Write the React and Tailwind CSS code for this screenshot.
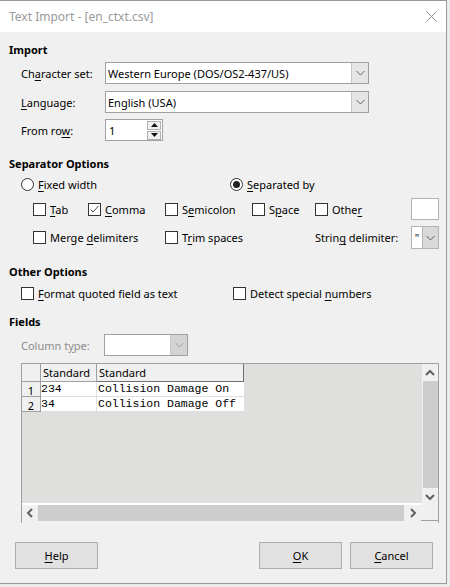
import React from "react";

// Underlined mnemonic letter
const U = ({ children }) => <span className="underline underline-offset-[2px] decoration-1">{children}</span>;

const Chevron = ({ color = "#606060" }) => (
  <svg width="9" height="6" viewBox="0 0 9 6" fill="none">
    <path d="M0.5 1 L4.5 5 L8.5 1" stroke={color} strokeWidth="1" />
  </svg>
);

const Check = ({ checked }) => (
  <span className="w-[13px] h-[13px] border border-[#333333] bg-white flex items-center justify-center shrink-0">
    {checked && (
      <svg width="11" height="11" viewBox="0 0 11 11" fill="none">
        <path d="M1.5 5.5 L4 8 L9.5 2" stroke="#444" strokeWidth="1" />
      </svg>
    )}
  </span>
);

const Radio = ({ on }) => (
  <span className="w-[13px] h-[13px] rounded-full border border-[#333333] bg-white flex items-center justify-center shrink-0">
    {on && <span className="w-[7px] h-[7px] rounded-full bg-[#222]" />}
  </span>
);

const Combo = ({ value, w, disabled }) => (
  <div className={`flex h-full border border-[#a0a0a0] bg-white ${w}`}>
    <div className="flex-1 flex items-center pl-[2px] overflow-hidden whitespace-nowrap">{value}</div>
    <div className={`w-[17px] flex items-center justify-center border-l border-[#c8c8c8] ${disabled ? "bg-[#d4d4d4]" : "bg-[#e5e5e5]"}`}>
      <Chevron color={disabled ? "#a0a0a0" : "#606060"} />
    </div>
  </div>
);

const Arrow = ({ dir }) => {
  const d = {
    up: "M1 6 L5 2 L9 6",
    down: "M1 2 L5 6 L9 2",
    left: "M6 1 L2 5 L6 9",
    right: "M2 1 L6 5 L2 9",
  }[dir];
  const vert = dir === "up" || dir === "down";
  return (
    <svg width={vert ? 10 : 8} height={vert ? 8 : 10} viewBox={vert ? "0 0 10 8" : "0 0 8 10"} fill="none">
      <path d={d} stroke="#606060" strokeWidth="2" />
    </svg>
  );
};

const Btn = ({ children, cls = "" }) => (
  <div className={`w-[83px] h-[27px] bg-[#e1e1e1] border border-[#adadad] flex items-center justify-center ${cls}`}>{children}</div>
);

const rows = [
  ["1", "234", "Collision Damage On"],
  ["2", "34", "Collision Damage Off"],
];

export default function App() {
  return (
    <div className="w-[450px] h-[587px] bg-[#ececec] font-['Noto_Sans',sans-serif] text-[11px] text-black leading-none">
      <div className="w-[447px] h-[584px] border-t border-r border-b border-[#9a9a9a] bg-[#f0f0f0] flex flex-col">
        {/* title bar */}
        <div className="h-[31px] bg-white flex items-center justify-between pl-[9px] pr-[9px] shrink-0">
          <span className="text-[12px] text-[#9b9b9b]">Text Import - [en_ctxt.csv]</span>
          <svg width="11" height="11" viewBox="0 0 11 11">
            <path d="M0.5 0.5 L10.5 10.5 M10.5 0.5 L0.5 10.5" stroke="#8a8a8a" strokeWidth="1" />
          </svg>
        </div>

        <div className="flex flex-col pl-[9px]">
          <div className="mt-[8px] h-[18px] flex items-center font-bold">Import</div>

          <div className="mt-[4px] h-[22px] flex items-center">
            <span className="ml-[12px] w-[84px]">Ch<U>a</U>racter set:</span>
            <Combo w="w-[264px]" value="Western Europe (DOS/OS2-437/US)" />
          </div>
          <div className="mt-[7px] h-[22px] flex items-center">
            <span className="ml-[12px] w-[84px]"><U>L</U>anguage:</span>
            <Combo w="w-[264px]" value="English (USA)" />
          </div>
          <div className="mt-[6px] h-[22px] flex items-center">
            <span className="ml-[12px] w-[84px]">From ro<U>w</U>:</span>
            <div className="w-[58px] h-full border border-[#a0a0a0] bg-white flex">
              <div className="flex-1 flex items-center pl-[3px]">1</div>
              <div className="w-[15px] flex flex-col justify-center gap-[1px] pr-[1px]">
                <div className="h-[9px] bg-[#f0f0f0] border border-[#b0b0b0] flex items-center justify-center">
                  <svg width="7" height="4" viewBox="0 0 7 4"><path d="M0 4 L3.5 0 L7 4 Z" fill="#111" /></svg>
                </div>
                <div className="h-[9px] bg-[#f0f0f0] border border-[#b0b0b0] flex items-center justify-center">
                  <svg width="7" height="4" viewBox="0 0 7 4"><path d="M0 0 L3.5 4 L7 0 Z" fill="#111" /></svg>
                </div>
              </div>
            </div>
          </div>

          <div className="mt-[13px] h-[18px] flex items-center font-bold">Separator Options</div>
          <div className="mt-[3px] h-[18px] flex items-center">
            <div className="ml-[12px] w-[209px] flex items-center gap-[4px]"><Radio /><span><U>F</U>ixed width</span></div>
            <div className="flex items-center gap-[4px]"><Radio on /><span><U>S</U>eparated by</span></div>
          </div>

          <div className="mt-[5px] h-[22px] flex items-center">
            <div className="ml-[24px] w-[55px] flex items-center gap-[4px]"><Check /><span><U>T</U>ab</span></div>
            <div className="w-[77px] flex items-center gap-[4px]"><Check checked /><span><U>C</U>omma</span></div>
            <div className="w-[87px] flex items-center gap-[4px]"><Check /><span>S<U>e</U>micolon</span></div>
            <div className="w-[63px] flex items-center gap-[4px]"><Check /><span>S<U>p</U>ace</span></div>
            <div className="w-[96px] flex items-center gap-[4px]"><Check /><span>Othe<U>r</U></span></div>
            <div className="w-[28px] h-full bg-white border border-[#b4b4b4]" />
          </div>

          <div className="mt-[6px] h-[23px] flex items-center">
            <div className="ml-[24px] w-[132px] flex items-center gap-[4px]"><Check /><span>Merge <U>d</U>elimiters</span></div>
            <div className="w-[150px] flex items-center gap-[4px]"><Check /><span>T<U>r</U>im spaces</span></div>
            <span className="w-[96px]">Strin<U>g</U> delimiter:</span>
            <div className="w-[28px] h-full flex border border-[#b4b4b4] bg-white">
              <div className="w-[10px] flex items-center justify-center text-black">"</div>
              <div className="flex-1 bg-[#d9d9d9] border-l border-[#b4b4b4] flex items-center justify-center"><Chevron /></div>
            </div>
          </div>

          <div className="mt-[13px] h-[18px] flex items-center font-bold">Other Options</div>
          <div className="mt-[4px] h-[18px] flex items-center">
            <div className="ml-[12px] w-[212px] flex items-center gap-[4px]"><Check /><span><U>F</U>ormat quoted field as text</span></div>
            <div className="flex items-center gap-[4px]"><Check /><span>Detect special <U>n</U>umbers</span></div>
          </div>

          <div className="mt-[10px] h-[18px] flex items-center font-bold">Fields</div>
          <div className="mt-[4px] h-[22px] flex items-center text-[#8c8c8c]">
            <span className="ml-[12px] w-[83px]">Column t<U>y</U>pe:</span>
            <Combo w="w-[84px]" value="" disabled />
          </div>

          {/* preview grid */}
          <div className="mt-[7px] ml-[12px] w-[418px] h-[160px] flex flex-col border-l border-t border-r border-[#a0a0a0]">
            <div className="flex h-[141px]">
              <div className="flex-1 bg-[#dfdfdd] border-b-2 border-white">
                <div className="flex h-[18px] text-[11px]">
                  <div className="w-[19px] bg-[#f0f0f0] border-r border-b border-[#a0a0a0]" />
                  <div className="w-[56px] bg-[#f0f0f0] border-r border-b border-[#a0a0a0] flex items-center pl-[2px]">Standard</div>
                  <div className="w-[147px] bg-[#f0f0f0] border-r border-b border-[#707070] flex items-center pl-[2px]">Standard</div>
                </div>
                {rows.map(([n, a, b]) => (
                  <div key={n} className="flex h-[15px] overflow-hidden">
                    <div className="w-[19px] bg-[#f0f0f0] border-r border-b border-[#a0a0a0] flex items-end justify-center text-[11px] leading-[11px]">{n}</div>
                    <div className="w-[56px] bg-white border-r border-b border-[#e0e0e0] font-['Liberation_Mono',monospace] text-[11.5px] leading-[13px]">{a}</div>
                    <div className="w-[147px] bg-white border-b border-[#e0e0e0] font-['Liberation_Mono',monospace] text-[11.5px] leading-[13px] pl-[1px]">{b}</div>
                  </div>
                ))}
              </div>
              <div className="w-[16px] bg-[#f0f0f0] flex flex-col items-center">
                <div className="h-[17px] flex items-center justify-center"><Arrow dir="up" /></div>
                <div className="w-[15px] h-[107px] bg-[#cdcdcd]" />
                <div className="h-[17px] flex items-center justify-center"><Arrow dir="down" /></div>
              </div>
            </div>
            <div className="flex h-[16px] bg-[#f0f0f0]">
              <div className="w-[16px] flex items-center justify-center"><Arrow dir="left" /></div>
              <div className="w-[366px] bg-[#cdcdcd]" />
              <div className="w-[17px] flex items-center justify-center"><Arrow dir="right" /></div>
              <div className="flex-1 border-b border-[#a0a0a0]" />
            </div>
          </div>

          <div className="mt-[19px] flex items-center text-[11px]">
            <Btn cls="ml-[6px]"><U>H</U>elp</Btn>
            <Btn cls="ml-[161px]"><U>O</U>K</Btn>
            <Btn cls="ml-[8px]"><U>C</U>ancel</Btn>
          </div>
        </div>
      </div>
    </div>
  );
}
